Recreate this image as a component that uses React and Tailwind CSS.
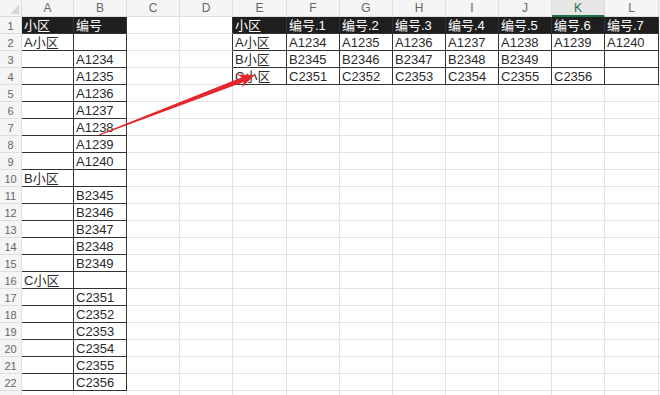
import React from "react";

const COLS = ["A", "B", "C", "D", "E", "F", "G", "H", "I", "J", "K", "L", ""];
const ROWS = 23;

// cell contents keyed like "B3"
const data = {};
data.A1 = "小区";
data.B1 = "编号";
data.A2 = "A小区";
data.A10 = "B小区";
data.A16 = "C小区";
for (let i = 0; i < 7; i++) data["B" + (3 + i)] = "A" + (1234 + i);
for (let i = 0; i < 5; i++) data["B" + (11 + i)] = "B" + (2345 + i);
for (let i = 0; i < 6; i++) data["B" + (17 + i)] = "C" + (2351 + i);

data.E1 = "小区";
for (let i = 1; i <= 7; i++) data[COLS[4 + i] + "1"] = "编号." + i;
data.E2 = "A小区";
data.E3 = "B小区";
data.E4 = "C小区";
for (let i = 0; i < 7; i++) data[COLS[5 + i] + "2"] = "A" + (1234 + i);
for (let i = 0; i < 5; i++) data[COLS[5 + i] + "3"] = "B" + (2345 + i);
for (let i = 0; i < 6; i++) data[COLS[5 + i] + "4"] = "C" + (2351 + i);

const inTable = (r, c) =>
  (c >= 0 && c <= 1 && r >= 1 && r <= 22) || (c >= 4 && c <= 11 && r >= 1 && r <= 4);

const Cell = ({ r, c }) => {
  const head = r === 1 && inTable(r, c);
  const darkR = inTable(r, c) || inTable(r, c + 1);
  const darkB = inTable(r, c) || inTable(r + 1, c);
  return (
    <div
      className={[
        "h-[17px] border-r border-b pl-[2px] leading-[17px] whitespace-nowrap overflow-hidden text-[13px]",
        darkR ? "border-r-[#333333]" : "border-r-[#e3e3e3]",
        darkB ? "border-b-[#333333]" : "border-b-[#e3e3e3]",
        head ? "bg-[#1e1e1e] text-white" : "text-[#2a2a2a]",
      ].join(" ")}
    >
      {data[COLS[c] + r] || ""}
    </div>
  );
};

const Arrow = () => (
  <svg
    className="absolute left-0 top-0 pointer-events-none"
    width="660"
    height="395"
    viewBox="0 0 660 395"
  >
    <polygon
      points="98.8,134.4 242,77.3 236.6,74.6 255,75 241.6,87.6 243.8,81.9 99.2,135.6"
      fill="#e5262c"
    />
  </svg>
);

export default function App() {
  return (
    <div
      className="relative w-[660px] h-[395px] overflow-hidden bg-white"
      style={{ fontFamily: '"Liberation Sans", "Noto Sans CJK SC", sans-serif' }}
    >
      <div className="grid grid-cols-[22px_52px_53px_53px_53px_54px_53px_53px_53px_53px_53px_53px_54px_1fr]">
        {/* column header row */}
        <div className="relative h-[17px] bg-[#f5f5f5] border-r border-b border-[#d9d9d9]">
          <svg className="absolute right-[2px] bottom-[2px]" width="9" height="9" viewBox="0 0 9 9">
            <polygon points="9,0 9,9 0,9" fill="#d6d6d6" />
          </svg>
        </div>
        {COLS.map((l, i) =>
          l === "K" ? (
            <div
              key={i}
              className="h-[17px] bg-[#e6e6e6] border-r border-r-[#d9d9d9] border-b-2 border-b-[#1e7145] text-center text-[12px] leading-[16px] text-[#1e7145]"
            >
              {l}
            </div>
          ) : (
            <div
              key={i}
              className="h-[17px] bg-[#f5f5f5] border-r border-b border-[#dedede] text-center text-[12px] leading-[16px] text-[#666666]"
            >
              {l}
            </div>
          )
        )}
        {Array.from({ length: ROWS }, (_, ri) => {
          const r = ri + 1;
          return (
            <React.Fragment key={r}>
              <div className="h-[17px] bg-[#f5f5f5] border-r border-b border-[#dedede] text-center text-[11px] leading-[18px] text-[#666666]">
                {r < ROWS ? r : ""}
              </div>
              {COLS.map((_, c) => (
                <Cell key={c} r={r} c={c} />
              ))}
            </React.Fragment>
          );
        })}
      </div>
      <Arrow />
    </div>
  );
}
